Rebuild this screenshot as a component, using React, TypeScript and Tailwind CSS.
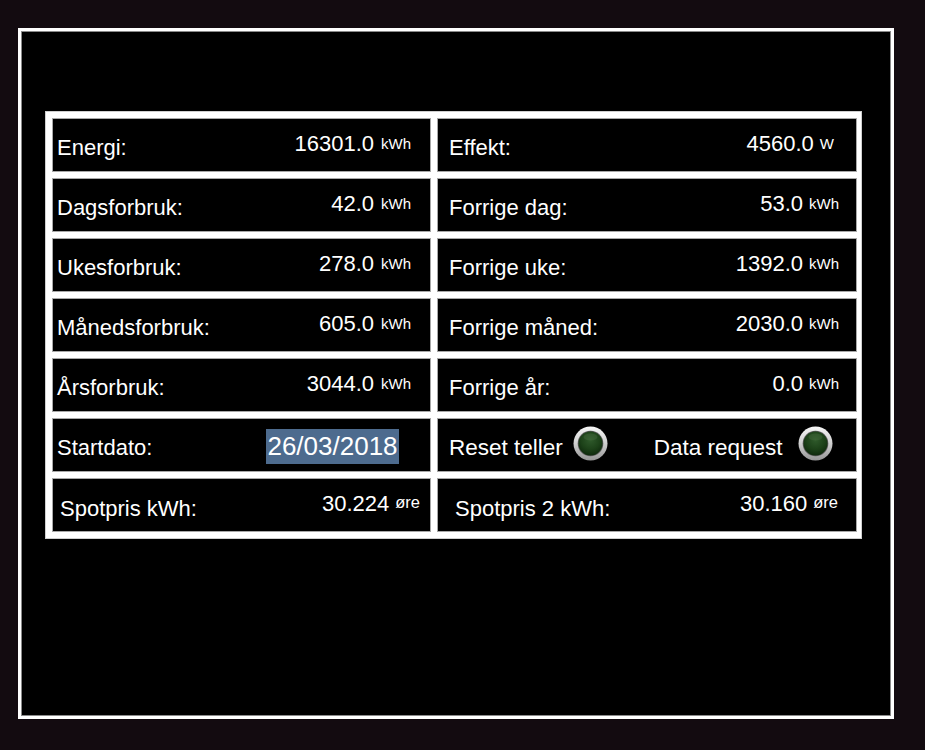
import React from "react";

type Row = {
  label: string;
  value: string;
  unit: string;
};

const left: Row[] = [
  { label: "Energi:", value: "16301.0", unit: "kWh" },
  { label: "Dagsforbruk:", value: "42.0", unit: "kWh" },
  { label: "Ukesforbruk:", value: "278.0", unit: "kWh" },
  { label: "Månedsforbruk:", value: "605.0", unit: "kWh" },
  { label: "Årsforbruk:", value: "3044.0", unit: "kWh" },
];

const right: Row[] = [
  { label: "Effekt:", value: "4560.0", unit: "W" },
  { label: "Forrige dag:", value: "53.0", unit: "kWh" },
  { label: "Forrige uke:", value: "1392.0", unit: "kWh" },
  { label: "Forrige måned:", value: "2030.0", unit: "kWh" },
  { label: "Forrige år:", value: "0.0", unit: "kWh" },
];

function Led() {
  return (
    <svg width="35" height="35" viewBox="0 0 35 35" className="shrink-0">
      <defs>
        <linearGradient id="ring" x1="0" y1="0" x2="0" y2="1">
          <stop offset="0" stopColor="#f6f6f6" />
          <stop offset="0.5" stopColor="#cfcfcf" />
          <stop offset="1" stopColor="#959595" />
        </linearGradient>
        <radialGradient id="green" cx="0.5" cy="0.35" r="0.65">
          <stop offset="0" stopColor="#2f5a2b" />
          <stop offset="0.6" stopColor="#1d4219" />
          <stop offset="1" stopColor="#0f2a0d" />
        </radialGradient>
      </defs>
      <circle cx="17.5" cy="17.5" r="17" fill="url(#ring)" />
      <circle cx="17.5" cy="17.5" r="12.8" fill="#5a5a5a" />
      <circle cx="17.5" cy="17.5" r="12" fill="url(#green)" />
      <ellipse cx="17.5" cy="11" rx="7" ry="3.5" fill="#4c7346" opacity="0.35" />
    </svg>
  );
}

function Cell({
  children,
  className = "",
}: {
  children: React.ReactNode;
  className?: string;
}) {
  return (
    <div
      className={
        "h-[54px] bg-black border border-[#a8a8a8] flex items-center text-white " +
        className
      }
    >
      {children}
    </div>
  );
}

function ValueCell({ row, side }: { row: Row; side: "l" | "r" }) {
  const labelPad = side === "l" ? "pl-[4px]" : "pl-[11px]";
  const rightPad =
    side === "l" ? "pr-[19px]" : row.unit === "W" ? "pr-[22px]" : "pr-[17px]";
  const gap = side === "l" ? "ml-[7px]" : "ml-[6px]";
  return (
    <Cell>
      <span className={"text-[22px] pt-[5px] " + labelPad}>{row.label}</span>
      <div className={"ml-auto flex items-start pb-[3px] " + rightPad}>
        <span className="text-[22px] leading-[25px]">{row.value}</span>
        <span className={"text-[15px] leading-[17px] mt-[4px] " + gap}>
          {row.unit}
        </span>
      </div>
    </Cell>
  );
}

export default function App() {
  return (
    <div className="w-[925px] h-[750px] bg-[#130b10] pt-[28px] pl-[18px] font-['Liberation_Sans',Arial,sans-serif] overflow-hidden">
      <div className="w-[876px] h-[691px] border-[3px] border-white">
        <div className="h-full border border-[#8a8a8a] bg-black pt-[79px] pl-[23px]">
          <div className="w-[817px] bg-white p-[6px] grid grid-cols-[379px_420px] gap-[6px] border border-[#cfcfcf]">
            {left.map((l, i) => (
              <React.Fragment key={l.label}>
                <ValueCell row={l} side="l" />
                <ValueCell row={right[i]} side="r" />
              </React.Fragment>
            ))}

            <Cell>
              <span className="text-[22px] pt-[5px] pl-[4px]">Startdato:</span>
              <span className="ml-auto mr-[31px] mt-[3px] w-[133px] h-[35px] leading-[35px] text-center text-[26px] bg-[#4d6b8e]">
                26/03/2018
              </span>
            </Cell>
            <Cell>
              <span className="text-[22.5px] pt-[5px] pl-[11px]">Reset teller</span>
              <span className="ml-[10px] mb-[4px] flex">
                <Led />
              </span>
              <span className="text-[22.5px] pt-[5px] ml-[46px]">Data request</span>
              <span className="ml-[15px] mb-[4px] flex">
                <Led />
              </span>
            </Cell>

            <Cell>
              <span className="text-[22px] pt-[7px] pl-[7px]">Spotpris kWh:</span>
              <div className="ml-auto flex items-start pb-[4px] pr-[10px]">
                <span className="text-[22px] leading-[25px]">30.224</span>
                <span className="text-[16.5px] leading-[18px] mt-[2px] ml-[6px]">
                  øre
                </span>
              </div>
            </Cell>
            <Cell>
              <span className="text-[22px] pt-[7px] pl-[17px]">Spotpris 2 kWh:</span>
              <div className="ml-auto flex items-start pb-[4px] pr-[18px]">
                <span className="text-[22px] leading-[25px]">30.160</span>
                <span className="text-[16.5px] leading-[18px] mt-[2px] ml-[6px]">
                  øre
                </span>
              </div>
            </Cell>
          </div>
        </div>
      </div>
    </div>
  );
}
